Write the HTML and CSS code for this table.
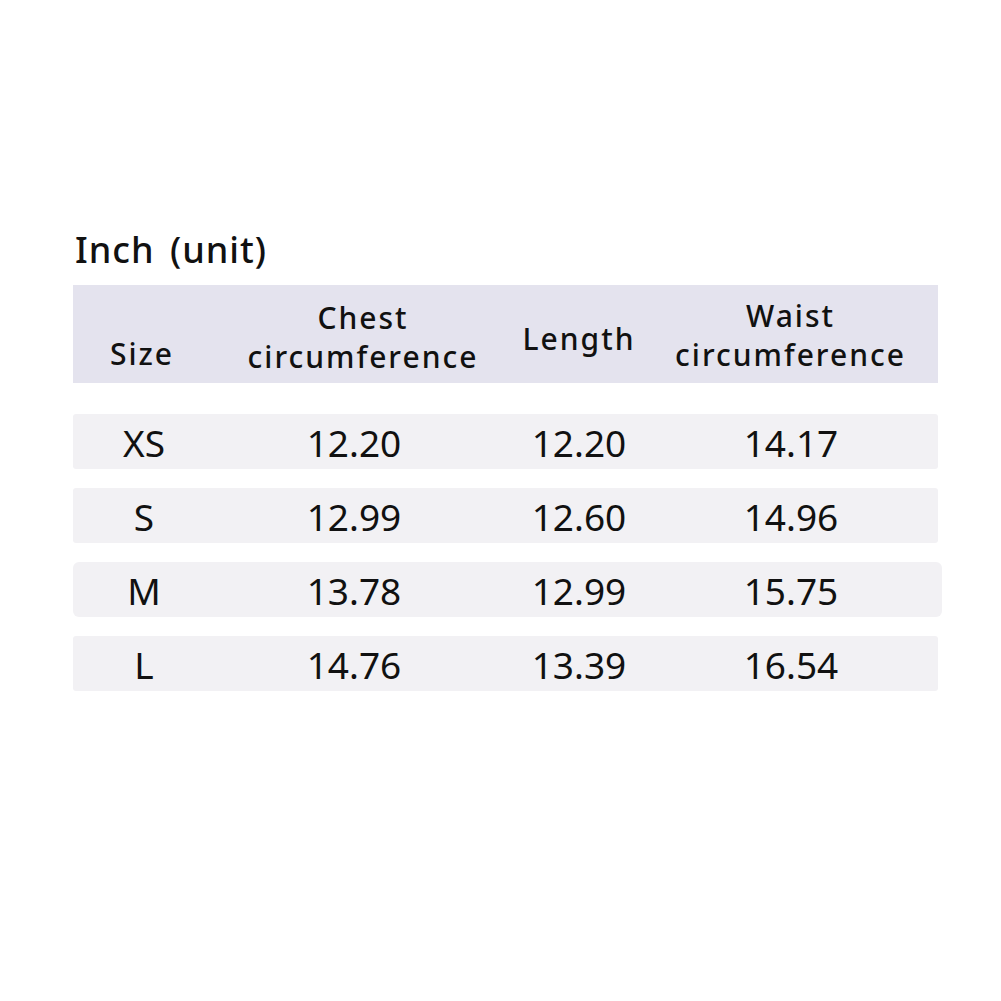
FILE: index.html
```html
<!DOCTYPE html>
<html>
<head>
<meta charset="utf-8">
<link rel="stylesheet" href="styles.css">
</head>
<body>
<div class="page">
  <h1 class="title">Inch (unit)</h1>
  <div class="head">
    <div class="cell size-h">Size</div>
    <div class="cell chest-h">Chest<br>circumference</div>
    <div class="cell len-h">Length</div>
    <div class="cell waist-h">Waist<br>circumference</div>
  </div>
  <div class="rows">
    <div class="row"><div class="cell">XS</div><div class="cell">12.20</div><div class="cell">12.20</div><div class="cell">14.17</div></div>
    <div class="row"><div class="cell">S</div><div class="cell">12.99</div><div class="cell">12.60</div><div class="cell">14.96</div></div>
    <div class="row wide"><div class="cell">M</div><div class="cell">13.78</div><div class="cell">12.99</div><div class="cell">15.75</div></div>
    <div class="row"><div class="cell">L</div><div class="cell">14.76</div><div class="cell">13.39</div><div class="cell">16.54</div></div>
  </div>
</div>
</body>
</html>
```

FILE: styles.css
```css
html, body {
  margin: 0;
  padding: 0;
  background: #ffffff;
}
body {
  font-family: "Noto Sans", "DejaVu Sans", sans-serif;
  color: #111111;
}
.page {
  padding: 227px 0 0 73px;
  width: 865px;
}
.title {
  margin: 0 0 12px 2px;
  font-size: 36px;
  font-weight: 500;
  line-height: 46px;
  letter-spacing: 1px;
  word-spacing: 5px;
}
.head {
  display: grid;
  grid-template-columns: 138px 304px 128px 295px;
  height: 98px;
  background: #e4e3ee;
  font-size: 30px;
  font-weight: 500;
  line-height: 39px;
  letter-spacing: 2px;
}
.cell {
  display: flex;
  align-items: center;
  justify-content: center;
  text-align: center;
}
.size-h { padding-top: 39px; }
.chest-h { padding-top: 6px; }
.len-h { padding-top: 9px; }
.waist-h { padding-top: 2px; }
.rows {
  margin-top: 31px;
  display: flex;
  flex-direction: column;
  gap: 19px;
}
.row {
  display: grid;
  grid-template-columns: 142px 278px 172px 252px 1fr;
  height: 55px;
  background: #f2f1f4;
  border-radius: 3px;
  font-size: 37px;
  padding-top: 2px;
  box-sizing: border-box;
}
.row.wide {
  margin-right: -4px;
  border-radius: 6px;
}
```
